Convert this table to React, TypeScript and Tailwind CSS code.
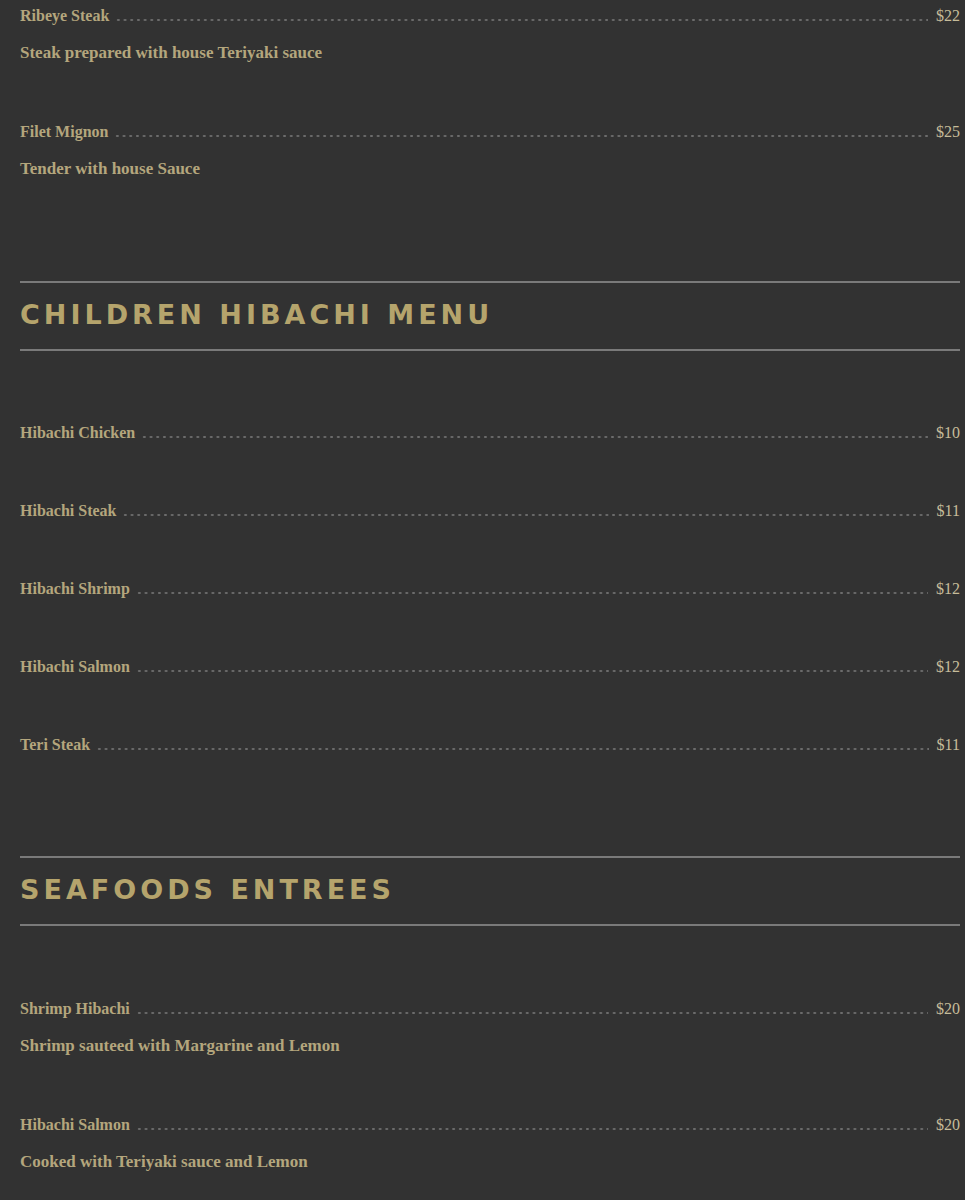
import React from 'react';

type Item = { name: string; price: string; desc?: string };

const steaks: Item[] = [
  { name: 'Ribeye Steak', price: '$22', desc: 'Steak prepared with house Teriyaki sauce' },
  { name: 'Filet Mignon', price: '$25', desc: 'Tender with house Sauce' },
];

const children: Item[] = [
  { name: 'Hibachi Chicken', price: '$10' },
  { name: 'Hibachi Steak', price: '$11' },
  { name: 'Hibachi Shrimp', price: '$12' },
  { name: 'Hibachi Salmon', price: '$12' },
  { name: 'Teri Steak', price: '$11' },
];

const seafood: Item[] = [
  { name: 'Shrimp Hibachi', price: '$20', desc: 'Shrimp sauteed with Margarine and Lemon' },
  { name: 'Hibachi Salmon', price: '$20', desc: 'Cooked with Teriyaki sauce and Lemon' },
];

function MenuRow({ item }: { item: Item }) {
  return (
    <div>
      <div className="flex h-[22px] items-center pt-[2px] leading-[22px]">
        <span className="text-[16px] font-bold text-[#b4a67d] whitespace-nowrap">{item.name}</span>
        {/* dotted leader */}
        <span className="ml-[6px] mr-[8px] mt-[7px] h-[4px] flex-1 bg-[radial-gradient(circle,#6c6c6c_1px,transparent_1.4px)] bg-[length:6.7px_4px] bg-repeat-x" />
        <span className="text-[16px] text-[#c6bc9a]">{item.price}</span>
      </div>
      {item.desc && (
        <p className="mt-[15px] h-[23px] text-[17px] leading-[23px] font-bold text-[#b4a67d]">{item.desc}</p>
      )}
    </div>
  );
}

function SectionTitle({ title }: { title: string }) {
  return (
    <div>
      <div className="h-[2px] bg-[#7a7a7a]" />
      <div className="flex h-[66px] items-center pb-[3px]">
        <h2 className="font-['DejaVu_Sans',sans-serif] text-[27px] font-bold uppercase tracking-[4px] text-[#b5a46c] leading-none">
          {title}
        </h2>
      </div>
      <div className="h-[2px] bg-[#7a7a7a]" />
    </div>
  );
}

export default function App() {
  return (
    <div className="min-h-[1200px] bg-[#323232] pl-[20px] pr-[5px] pt-[4px] font-['Liberation_Serif',serif]">
      <div className="flex flex-col gap-[56px]">
        {steaks.map((it) => (
          <MenuRow key={it.name} item={it} />
        ))}
      </div>

      <div className="mt-[101px]">
        <SectionTitle title="Children Hibachi Menu" />
      </div>
      <div className="mt-[70px] flex flex-col gap-[56px]">
        {children.map((it) => (
          <MenuRow key={it.name} item={it} />
        ))}
      </div>

      <div className="mt-[101px]">
        <SectionTitle title="Seafoods Entrees" />
      </div>
      <div className="mt-[71px] flex flex-col gap-[56px]">
        {seafood.map((it) => (
          <MenuRow key={it.name} item={it} />
        ))}
      </div>
    </div>
  );
}
